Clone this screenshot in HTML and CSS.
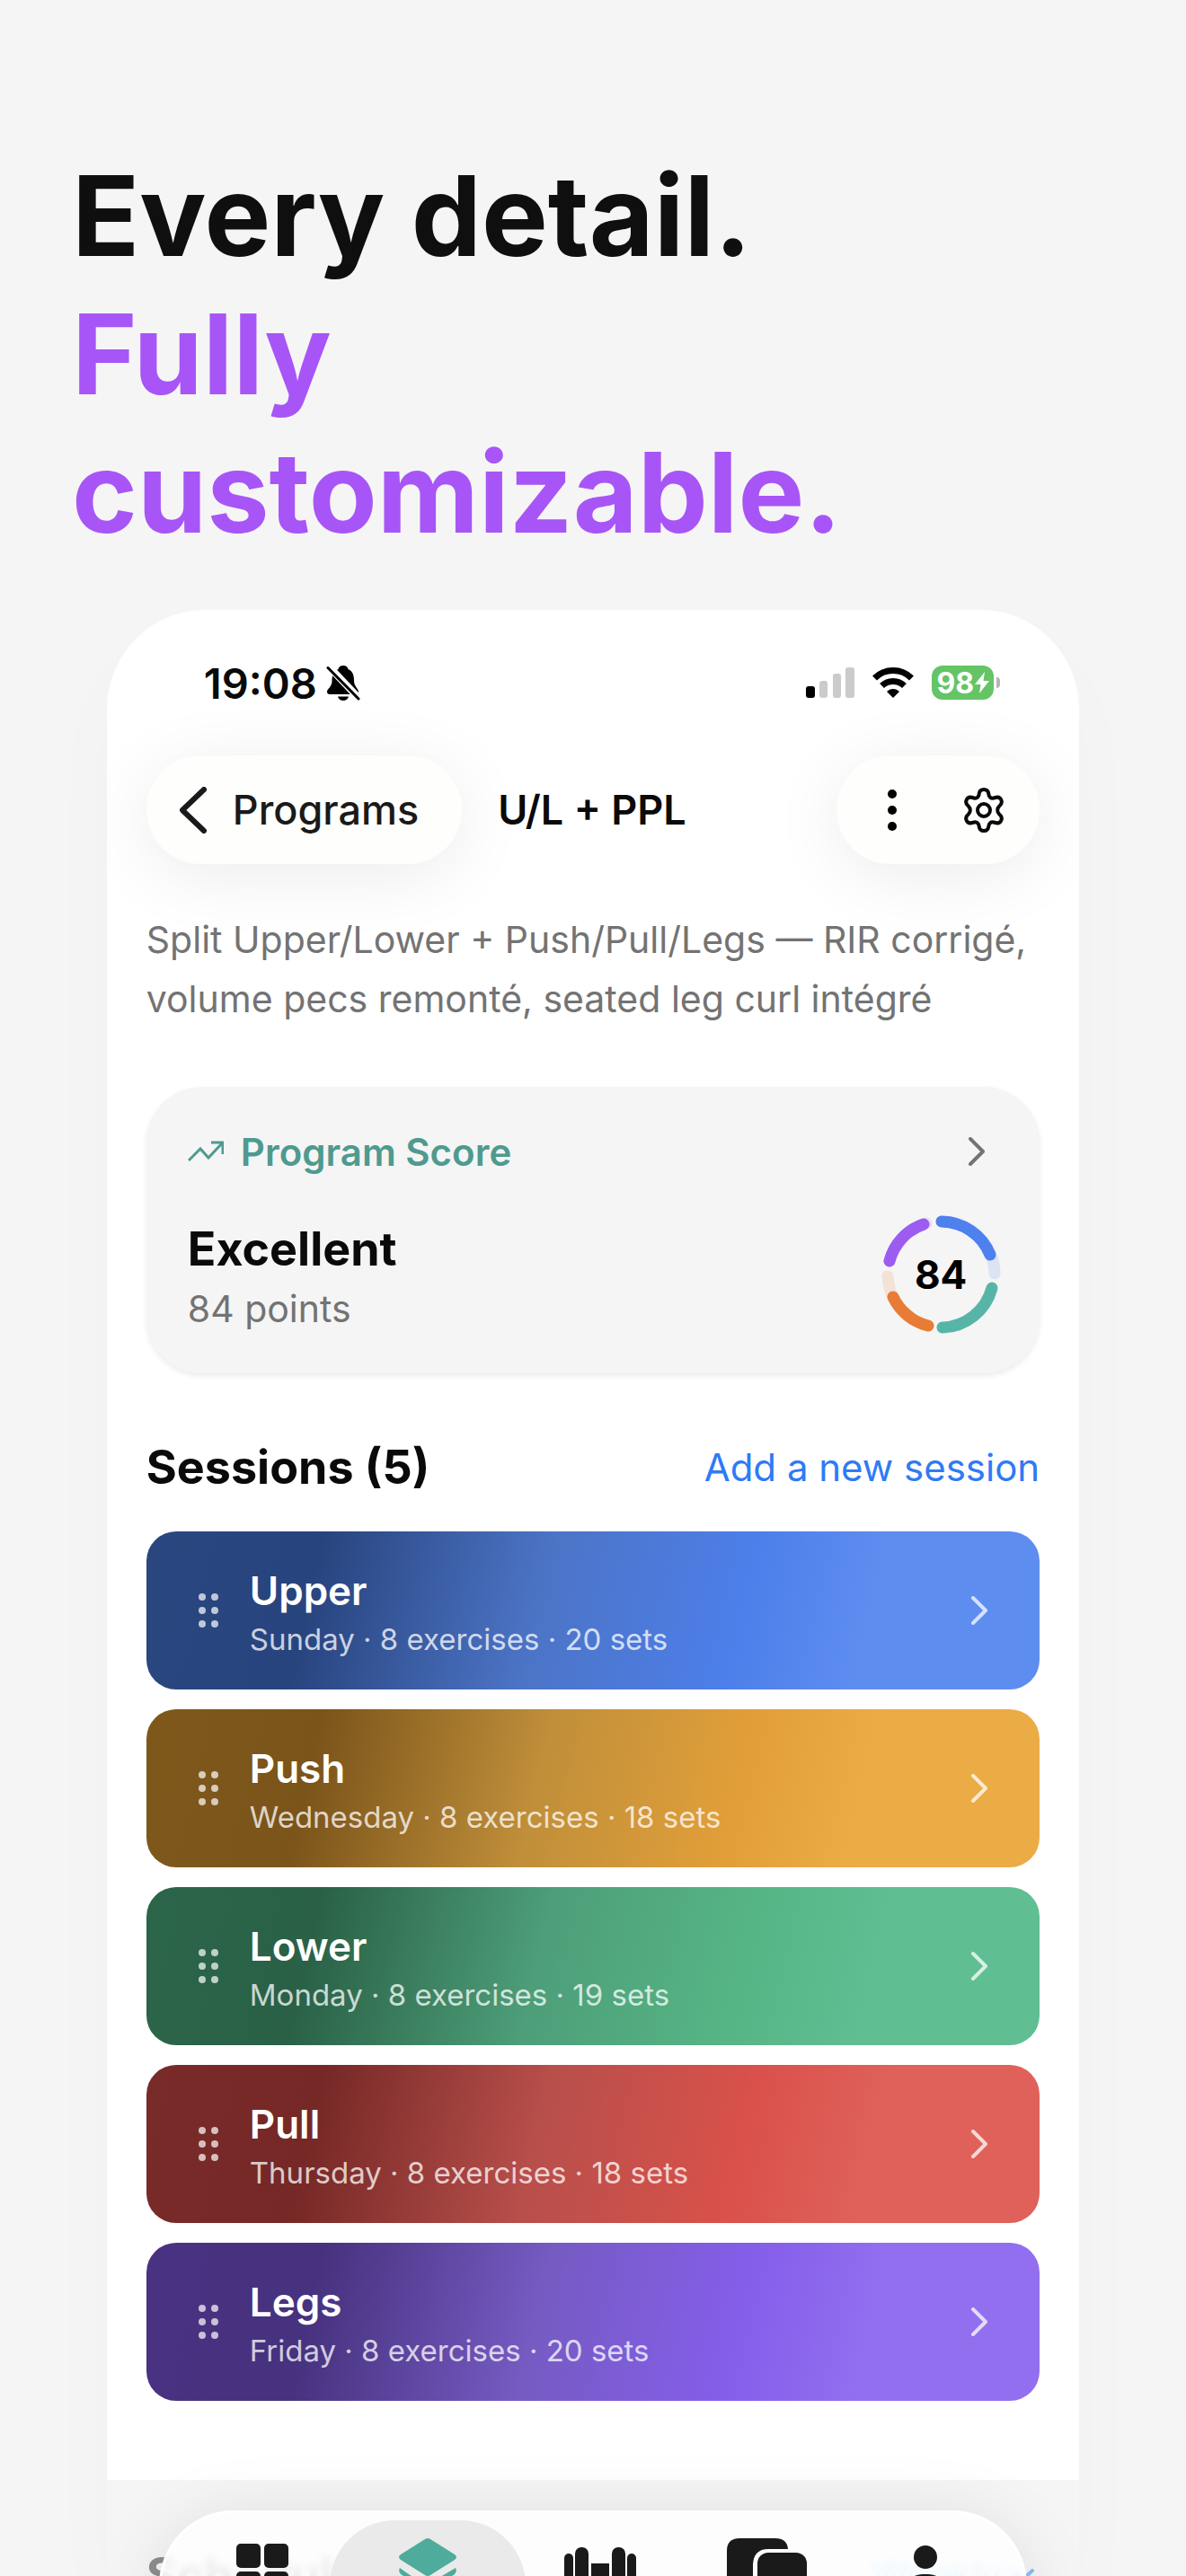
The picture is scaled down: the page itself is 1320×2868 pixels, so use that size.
FILE: index.html
```html
<!DOCTYPE html>
<html lang="en">

<head>
	<meta charset="UTF-8">
	<meta name="viewport" content="width=device-width, initial-scale=1.0">
	<title>U/L + PPL</title>
	<link rel="stylesheet" href="styles.css">
</head>

<body>
	<h1 class="headline">Every detail.<br><span class="accent">Fully<br>customizable.</span></h1>

	<main class="phone">
		<div class="status-bar">
			<div class="status-left">
				<span class="time">19:08</span>
				<svg class="bell" viewBox="0 0 38 40" width="38" height="40">
					<path d="M19 1c3 0 5 1.500 5.500 4C30 7.500 31 12 31 18c0 6 5 9 5 12 0 2-1 3-3 3H4c-2 0-3-1-3-3 0-3 5.500-5 5.500-12 0-6 2-11 7-13C14 2.500 16 1 19 1z" />
					<path d="M13 35.500h12c-.5 2.500-3 4.500-6 4.500s-5.500-2-6-4.500z" />
					<path class="bell-gap" d="M3 2l34 36" />
					<path class="bell-slash" d="M2 3.500l34 34.500" />
				</svg>
			</div>
			<div class="status-right">
				<svg class="signal" viewBox="0 0 54 34" width="54" height="34">
					<rect x="0" y="21" width="10" height="13" rx="3" />
					<rect class="off" x="15" y="15" width="9" height="19" rx="3" />
					<rect class="off" x="30" y="7" width="9" height="27" rx="3" />
					<rect class="off" x="44" y="0" width="10" height="34" rx="3" />
				</svg>
				<svg class="wifi" viewBox="0 0 46 34" width="46" height="34">
					<path d="M2.500 12a29 29 0 0 1 41 0" />
					<path d="M10.500 20.500a18 18 0 0 1 25 0" />
					<path class="dot" d="M23 34l-7-7c4-4 10-4 14 0z" />
				</svg>
				<div class="battery">
					<span class="battery-level">98<svg viewBox="0 0 16 24" width="16" height="24">
							<path d="M11 0L0 14h6.500L5 24l11-14H9.500z" />
						</svg></span>
					<span class="battery-tip"></span>
				</div>
			</div>
		</div>

		<header class="nav-bar">
			<a class="pill back" href="#">
				<svg viewBox="0 0 30 52" width="30" height="52">
					<path d="M27 3L3 26l24 23" />
				</svg>
				Programs
			</a>
			<h2 class="nav-title">U/L + PPL</h2>
			<div class="pill actions">
				<button type="button" aria-label="More">
					<svg class="dots" viewBox="0 0 10 46" width="10" height="46">
						<circle cx="5" cy="5" r="5" />
						<circle cx="5" cy="23" r="5" />
						<circle cx="5" cy="41" r="5" />
					</svg>
				</button>
				<button type="button" aria-label="Settings">
					<svg class="gear" viewBox="0 0 46 50" width="46" height="50">
						<path d="M23 2c3.500 0 5 2 5.300 5 .3 3 2.500 5.500 5.700 4.500 3-1 6-2 8 1.500s.6 5.500-1.800 7.500c-2.700 2.500-2.700 6.500 0 9 2.400 2 3.800 4 1.800 7.500s-5 2.500-8 1.500c-3.200-1-5.400 1.500-5.700 4.500-.3 3-1.800 5-5.300 5s-5-2-5.300-5c-.3-3-2.500-5.500-5.700-4.500-3 1-6 2-8-1.500s-.6-5.500 1.800-7.500c2.700-2.500 2.700-6.500 0-9C3.400 18.500 2 16.500 4 13s5-2.500 8-1.500c3.200 1 5.400-1.500 5.700-4.500.3-3 1.800-5 5.300-5z" />
						<circle cx="23" cy="25" r="7" />
					</svg>
				</button>
			</div>
		</header>

		<p class="description">Split Upper/Lower + Push/Pull/Legs — RIR corrigé, volume pecs remonté, seated leg curl intégré</p>

		<a class="score-card" href="#">
			<div class="score-header">
				<svg class="trend" viewBox="0 0 40 24" width="40" height="24">
					<path d="M1 22L14 9l9 10L38 3M26 2h13v13" />
				</svg>
				<span class="score-label">Program Score</span>
				<svg class="chevron" viewBox="0 0 18 32" width="18" height="32">
					<path d="M2 2l14 14L2 30" />
				</svg>
			</div>
			<div class="score-body">
				<div>
					<div class="score-grade">Excellent</div>
					<div class="score-points">84 points</div>
				</div>
				<div class="ring">
					<svg viewBox="-67 -67 134 134" width="134" height="134">
						<path class="track blue" d="M1-59A59 59 0 0 1 60 -1" />
						<path class="blue" d="M1-59A59 59 0 0 1 55-22" />
						<path class="teal" d="M57 15A59 59 0 0 1 2 59" />
						<path class="track orange" d="M-14 57A59 59 0 0 1-59 2" />
						<path class="orange" d="M-14 57A59 59 0 0 1-53 25" />
						<path class="track purple" d="M-57-15A59 59 0 0 1-16-57" />
						<path class="purple" d="M-57-15A59 59 0 0 1-19-56" />
					</svg>
					<span class="ring-value">84</span>
				</div>
			</div>
		</a>

		<div class="sessions-header">
			<h3>Sessions (5)</h3>
			<a href="#">Add a new session</a>
		</div>

		<ul class="sessions" id="sessions"></ul>

		<section class="schedule">
			<h3>Schedule</h3>
			<a href="#">Weekly
				<svg viewBox="0 0 26 14" width="26" height="14">
					<path d="M2 2l11 10L24 2" />
				</svg>
			</a>
		</section>

		<nav class="tab-bar">
			<a href="#" aria-label="Dashboard">
				<svg viewBox="0 0 58 58" width="58" height="58">
					<rect x="0" y="0" width="27" height="27" rx="5" />
					<rect x="31" y="0" width="27" height="27" rx="5" />
					<rect x="0" y="31" width="27" height="27" rx="5" />
					<rect x="31" y="31" width="27" height="27" rx="5" />
				</svg>
			</a>
			<a class="active" href="#" aria-label="Programs">
				<svg viewBox="0 0 64 70" width="64" height="70">
					<path d="M29 1q3-2 6 0l27 17q4 3 0 6L35 41q-3 2-6 0L2 24q-4-3 0-6z" />
					<path d="M1 33q31 22 31 20T63 33q2 4-1 7L35 58q-3 2-6 0L2 40q-3-3-1-7z" />
				</svg>
			</a>
			<a href="#" aria-label="Exercises">
				<svg viewBox="0 0 80 50" width="80" height="50">
					<rect x="0" y="7" width="10" height="36" rx="5" />
					<rect x="12" y="0" width="15" height="50" rx="7" />
					<rect x="30" y="18" width="20" height="14" />
					<rect x="53" y="0" width="15" height="50" rx="7" />
					<rect x="70" y="7" width="10" height="36" rx="5" />
				</svg>
			</a>
			<a href="#" aria-label="History">
				<svg viewBox="0 0 90 70" width="90" height="70">
					<path d="M14 0h40q13 0 14 12H46q-16 0-17 17v27H14Q0 56 0 42V14Q0 0 14 0z" />
					<rect x="34" y="16" width="55" height="54" rx="12" />
				</svg>
			</a>
			<a href="#" aria-label="Profile">
				<svg viewBox="0 0 60 54" width="60" height="54">
					<circle cx="30" cy="13" r="13" />
					<path d="M30 32c16 0 26 8 26 22H4c0-14 10-22 26-22z" />
				</svg>
			</a>
		</nav>
	</main>

	<script>
		const sessions = [
			{ name: 'Upper', day: 'Sunday', exercises: 8, sets: 20, color: 'upper' },
			{ name: 'Push', day: 'Wednesday', exercises: 8, sets: 18, color: 'push' },
			{ name: 'Lower', day: 'Monday', exercises: 8, sets: 19, color: 'lower' },
			{ name: 'Pull', day: 'Thursday', exercises: 8, sets: 18, color: 'pull' },
			{ name: 'Legs', day: 'Friday', exercises: 8, sets: 20, color: 'legs' }
		];

		const list = document.getElementById('sessions');
		sessions.forEach(session => {
			const item = document.createElement('li');
			item.innerHTML = `
				<a class="session ${session.color}" href="#">
					<svg class="grip" viewBox="0 0 22 38" width="22" height="38">
						<circle cx="4" cy="4" r="4" /><circle cx="18" cy="4" r="4" />
						<circle cx="4" cy="19" r="4" /><circle cx="18" cy="19" r="4" />
						<circle cx="4" cy="34" r="4" /><circle cx="18" cy="34" r="4" />
					</svg>
					<div class="session-text">
						<div class="session-name">${session.name}</div>
						<div class="session-meta">${session.day} · ${session.exercises} exercises · ${session.sets} sets</div>
					</div>
					<svg class="chevron" viewBox="0 0 18 32" width="18" height="32">
						<path d="M2 2l14 14L2 30" />
					</svg>
				</a>
			`;
			list.appendChild(item);
		});
	</script>
</body>

</html>
```
FILE: styles.css
```css
* {
	box-sizing: border-box;
}

body {
	display: flex;
	flex-direction: column;
	height: 100vh;
	margin: 0;
	overflow: hidden;
	background-color: #f5f5f5;
	color: #0a0a0a;
	font-family: Inter, "Liberation Sans", sans-serif;
}

h1,
h2,
h3,
p,
ul {
	margin: 0;
	padding: 0;
}

a {
	color: inherit;
	text-decoration: none;
}

.headline {
	padding: 163px 80px 54px;
	color: #0f0f0f;
	font-size: 124px;
	font-weight: 700;
	line-height: 154px;
}

.accent {
	color: #a855f7;
}

.phone {
	position: relative;
	display: flex;
	flex: 1;
	flex-direction: column;
	width: 82%;
	margin: 0 auto;
	border-radius: 110px 110px 0 0;
	background-color: #fff;
	box-shadow: 0 40px 100px rgba(0, 0, 0, 0.02);
	overflow: hidden;
}

/* Status bar */

.status-bar {
	display: flex;
	flex-shrink: 0;
	justify-content: space-between;
	align-items: center;
	height: 162px;
	padding: 0 88px 0 108px;
}

.status-left,
.status-right {
	display: flex;
	align-items: center;
}

.status-left {
	gap: 10px;
}

.status-right {
	gap: 20px;
}

.time {
	font-size: 47px;
	font-weight: 600;
}

.bell-gap {
	stroke: #fff;
	stroke-width: 8;
}

.bell-slash {
	stroke: #000;
	stroke-width: 3;
	stroke-linecap: round;
}

.signal .off {
	fill: #cbcbcb;
}

.wifi {
	fill: none;
	stroke: #000;
	stroke-width: 7;
}

.wifi .dot {
	fill: #000;
	stroke: none;
}

.battery {
	display: flex;
	align-items: center;
	gap: 3px;
}

.battery-level {
	display: flex;
	align-items: center;
	justify-content: center;
	gap: 1px;
	width: 69px;
	height: 38px;
	border-radius: 12px;
	background-color: #65c466;
	color: #fff;
	font-size: 32px;
	font-weight: 700;
}

.battery-level svg {
	fill: #fff;
}

.battery-tip {
	width: 4px;
	height: 12px;
	border-radius: 0 6px 6px 0;
	background-color: #b5b5b5;
}

/* Navigation bar */

.nav-bar {
	display: flex;
	align-items: center;
	padding: 0 44px;
}

.pill {
	display: flex;
	align-items: center;
	height: 121px;
	border-radius: 61px;
	background-color: #fefefd;
	box-shadow: 0 12px 80px rgba(0, 0, 0, 0.08);
}

.back {
	gap: 29px;
	padding: 0 48px 0 37px;
	color: #1a1a1a;
	font-size: 45px;
	font-weight: 500;
}

.back svg {
	fill: none;
	stroke: #1a1a1a;
	stroke-width: 6;
	stroke-linecap: round;
	stroke-linejoin: round;
}

.nav-title {
	flex: 1;
	padding-left: 40px;
	font-size: 45px;
	font-weight: 600;
}

.actions {
	gap: 46px;
	padding: 0 34px;
}

.actions button {
	display: flex;
	justify-content: center;
	width: 56px;
	padding: 0;
	border: 0;
	background: none;
}

.gear {
	fill: none;
	stroke: #0a0a0a;
	stroke-width: 4;
}

.description {
	padding: 51px 44px 65px;
	color: #737373;
	font-size: 41px;
	line-height: 66px;
}

/* Program score */

.score-card {
	margin: 0 44px;
	padding: 48px 43px 43px 46px;
	border-radius: 62px;
	background-color: #f5f5f5;
	box-shadow: 0 3px 6px rgba(0, 0, 0, 0.08);
}

.score-header {
	display: flex;
	align-items: center;
	gap: 19px;
	height: 48px;
	margin-bottom: 46px;
}

.trend {
	fill: none;
	stroke: #4f9a8f;
	stroke-width: 3;
}

.score-label {
	flex: 1;
	color: #4f9a8f;
	font-size: 42px;
	font-weight: 600;
}

.chevron {
	margin-right: 18px;
	fill: none;
	stroke: #737373;
	stroke-width: 4;
	stroke-linecap: round;
	stroke-linejoin: round;
}

.score-body {
	display: flex;
	justify-content: space-between;
	align-items: center;
}

.score-grade {
	font-size: 52px;
	font-weight: 700;
	line-height: 76px;
}

.score-points {
	color: #737373;
	font-size: 41px;
	line-height: 56px;
}

.ring {
	display: grid;
	place-items: center;
	color: #000;
	font-size: 44px;
	font-weight: 700;
}

.ring > * {
	grid-area: 1 / 1;
}

.ring svg {
	fill: none;
	stroke-width: 13;
	stroke-linecap: round;
}

.ring .blue {
	stroke: #4e80ee;
}

.ring .teal {
	stroke: #57b5a8;
}

.ring .orange {
	stroke: #e87b35;
}

.ring .purple {
	stroke: #9d5cf0;
}

.ring .track {
	opacity: 0.15;
}

/* Sessions */

.sessions-header {
	display: flex;
	justify-content: space-between;
	align-items: center;
	height: 64px;
	margin: 73px 44px 40px;
}

.sessions-header h3 {
	font-size: 52px;
	font-weight: 700;
}

.sessions-header a {
	color: #2f7af5;
	font-size: 42px;
}

.sessions {
	display: flex;
	flex-direction: column;
	gap: 22px;
	margin: 0 44px 88px;
	list-style-type: none;
}

.session {
	display: flex;
	align-items: center;
	height: 176px;
	padding: 0 40px 0 58px;
	border-radius: 33px;
	color: #fff;
}

.upper {
	background: linear-gradient(103deg, #2a4780 0%, #28447e 19%, #4c74c6 44%, #4d7fea 66%, #5e8df0 80%);
}

.push {
	background: linear-gradient(103deg, #7e581b 0%, #7b541a 19%, #c08f3a 44%, #e29f39 66%, #ebac46 80%);
}

.lower {
	background: linear-gradient(103deg, #2b654a 0%, #2a6146 19%, #4d9e79 44%, #56b585 66%, #5fbe92 80%);
}

.pull {
	background: linear-gradient(103deg, #782b28 0%, #752826 19%, #b84f4b 44%, #d9514a 66%, #df615a 80%);
}

.legs {
	background: linear-gradient(103deg, #4a3282 0%, #46327e 19%, #765bc3 44%, #855eea 66%, #916fef 80%);
}

.grip {
	margin-right: 35px;
	fill: rgba(255, 255, 255, 0.7);
}

.session-text {
	flex: 1;
}

.session-name {
	font-size: 44px;
	font-weight: 600;
	line-height: 64px;
}

.session-meta {
	color: rgba(255, 255, 255, 0.75);
	font-size: 33px;
	line-height: 44px;
}

.session .chevron {
	stroke: rgba(255, 255, 255, 0.75);
}

/* Schedule, mostly behind the tab bar */

.schedule {
	display: flex;
	flex: 1;
	justify-content: space-between;
	align-items: flex-start;
	padding: 74px 50px 0 44px;
	background-color: #f5f5f5;
}

.schedule h3 {
	color: #8e8e8e;
	font-size: 52px;
	line-height: 64px;
}

.schedule a {
	display: flex;
	align-items: center;
	gap: 10px;
	color: #7fd4ff;
	font-size: 42px;
	line-height: 64px;
}

.schedule svg {
	fill: none;
	stroke: #8ebcf8;
	stroke-width: 4;
	stroke-linecap: round;
}

.tab-bar {
	position: absolute;
	right: 58px;
	bottom: -94px;
	left: 58px;
	display: grid;
	grid-template-columns: 186fr 182fr 202fr 170fr 182fr;
	height: 167px;
	padding: 8px 19px;
	border: 3px solid #fff;
	border-radius: 84px;
	background-color: rgba(254, 254, 254, 0.85);
	box-shadow: 0 10px 80px rgba(0, 0, 0, 0.1);
	backdrop-filter: blur(4px);
}

.tab-bar a {
	display: flex;
	justify-content: center;
	align-items: center;
	padding-bottom: 35px;
	fill: #1a1a1a;
}

.tab-bar .active {
	margin: 0 -18px;
	border-radius: 73px;
	background-color: #eaeaea;
	fill: #4fab9b;
}
```
